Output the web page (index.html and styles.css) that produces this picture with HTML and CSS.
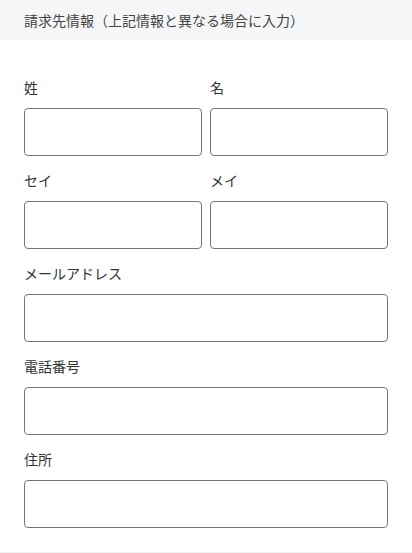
FILE: index.html
```html
<!DOCTYPE html>
<html lang="ja">
<head>
  <meta charset="UTF-8">
  <title>請求先情報</title>
  <link rel="stylesheet" href="styles.css">
</head>
<body>

  <div class="seccion-titulo">請求先情報（上記情報と異なる場合に入力）</div>

  <form class="formulario">
    <div class="fila">
      <div class="campo">
        <label for="sei">姓</label>
        <input id="sei" type="text">
      </div>
      <div class="campo">
        <label for="mei">名</label>
        <input id="mei" type="text">
      </div>
    </div>

    <div class="fila">
      <div class="campo">
        <label for="sei-kana">セイ</label>
        <input id="sei-kana" type="text">
      </div>
      <div class="campo">
        <label for="mei-kana">メイ</label>
        <input id="mei-kana" type="text">
      </div>
    </div>

    <div class="campo">
      <label for="email">メールアドレス</label>
      <input id="email" type="email">
    </div>

    <div class="campo">
      <label for="tel">電話番号</label>
      <input id="tel" type="tel">
    </div>

    <div class="campo">
      <label for="direccion">住所</label>
      <input id="direccion" type="text">
    </div>
  </form>

  <div class="pie"></div>

</body>
</html>
```

FILE: styles.css
```css
body {
  margin: 0;
  background-color: #fff;
  color: #333;
  font-family: 'Noto Sans CJK JP', 'Noto Sans', sans-serif;
  font-size: 14px;
}

.seccion-titulo {
  height: 40px;
  line-height: 40px;
  padding: 0 24px;
  background-color: #f5f6f8;
  color: #444;
  font-size: 14px;
}

.formulario {
  display: flex;
  flex-direction: column;
  gap: 14px;
  padding: 37px 24px 24px;
}

.fila {
  display: grid;
  grid-template-columns: 1fr 1fr;
  gap: 8px;
}

.campo {
  display: flex;
  flex-direction: column;
}

label {
  line-height: 21px;
  margin-bottom: 10px;
}

input {
  box-sizing: border-box;
  height: 48px;
  width: 100%;
  border: 1px solid #767676;
  border-radius: 4px;
  padding: 0 12px;
  font-family: inherit;
  font-size: 14px;
}

.pie {
  border-top: 1px solid #f0f0f0;
  height: 40px;
}
```
